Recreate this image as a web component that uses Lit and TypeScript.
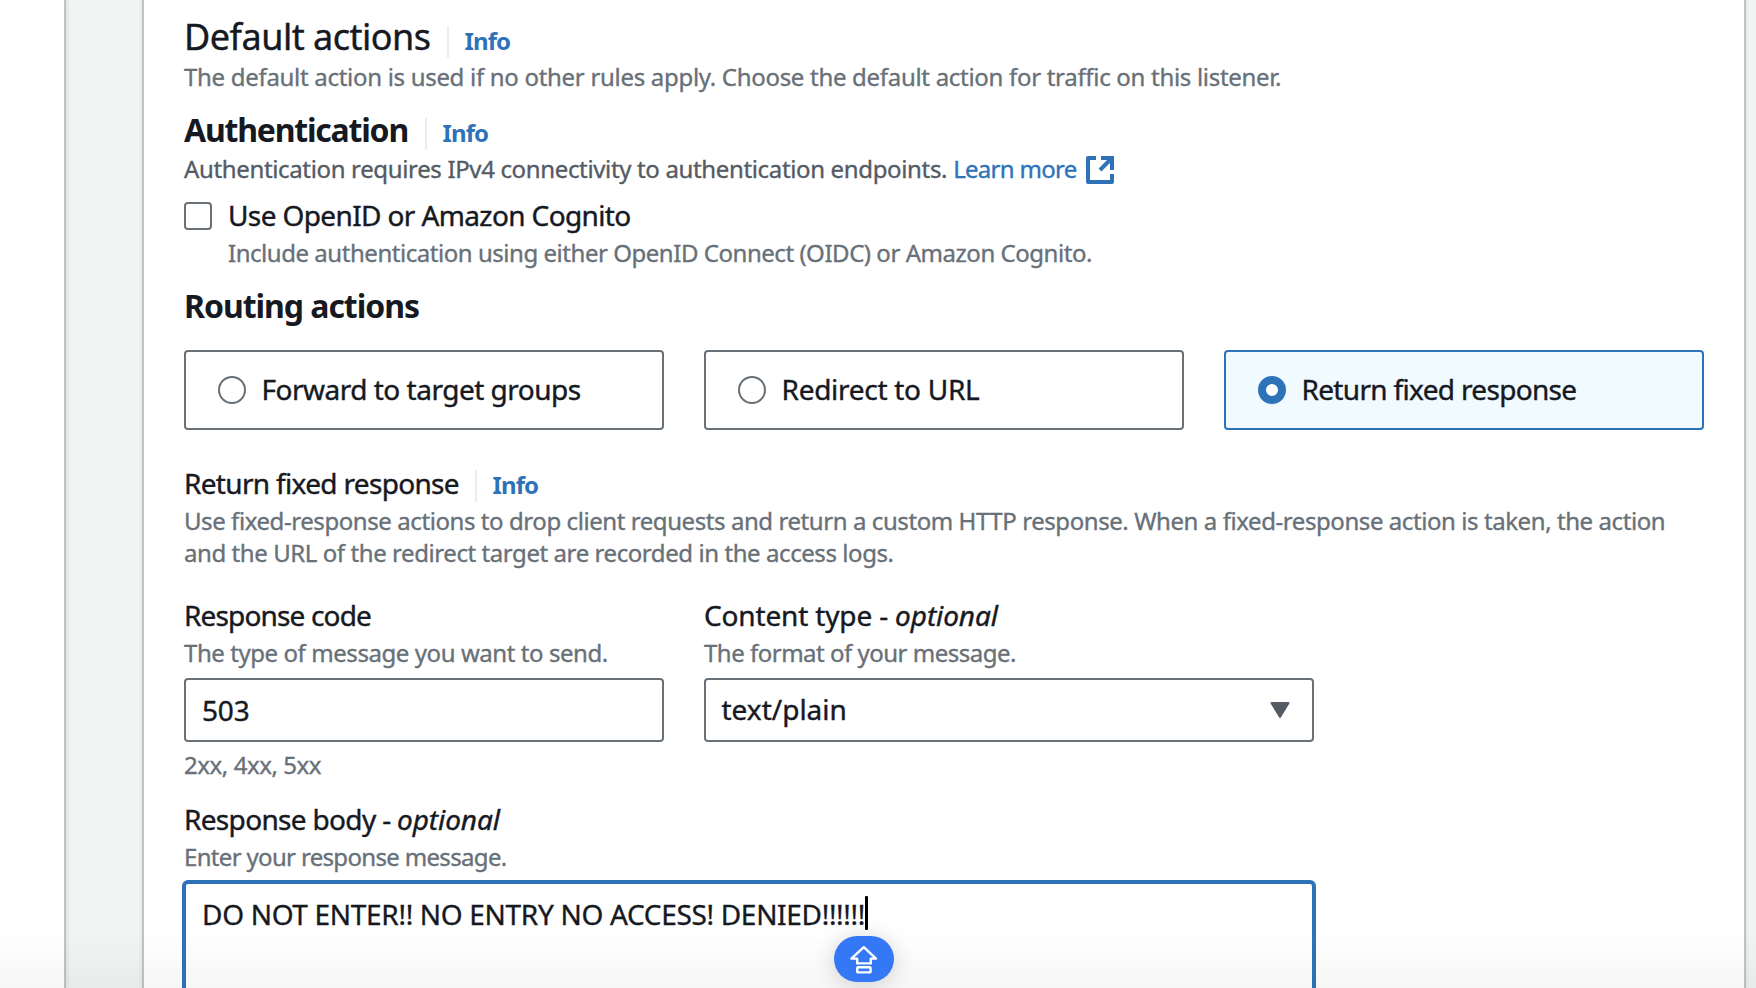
import { LitElement, html, css } from "lit";
import { customElement, property, state } from "lit/decorators.js";
import { classMap } from "lit/directives/class-map.js";

@customElement("info-heading")
class InfoHeading extends LitElement {
  @property() level = "label";
  @property() text = "";

  static styles = css`
    :host { display: block; }
    .row { display: flex; align-items: baseline; white-space: nowrap; }
    .title { color: #16191f; }
    .h2 { font-size: 36px; line-height: 44px; letter-spacing: -0.5px; width: 263px; -webkit-text-stroke: 0.4px; }
    .h3 { font-size: 32px; line-height: 40px; font-weight: 700; letter-spacing: -1.21px; width: 241px; }
    .label { font-size: 28px; line-height: 40px; letter-spacing: -0.67px; width: 291px; -webkit-text-stroke: 0.4px; }
    .divider { align-self: flex-end; width: 2px; height: 32px; background: #eaeded; }
    .h2 + .divider { margin-bottom: 1px; }
    .label + .divider { margin-bottom: 1px; }
    .info { margin-left: 15.5px; color: #2e73b8; font-size: 24px; line-height: 32px; font-weight: 700; letter-spacing: -0.9px; }
  `;

  render() {
    return html`<div class="row">
      <span class="title ${this.level}">${this.text}</span>
      <span class="divider"></span>
      <span class="info">Info</span>
    </div>`;
  }
}

@customElement("app-root")
class AppRoot extends LitElement {
  @state() private selected = 2;

  private options = [
    { label: "Forward to target groups", cls: "t-forward" },
    { label: "Redirect to URL", cls: "t-redirect" },
    { label: "Return fixed response", cls: "t-return" },
  ];

  static styles = css`
    * { box-sizing: border-box; }
    :host {
      display: block; position: relative; width: 1756px; height: 988px; overflow: hidden;
      background: #f2f3f3; color: #16191f; font-family: "Noto Sans", sans-serif;
    }
    .page { display: flex; height: 988px; }
    .nav { width: 66px; flex: none; background: #fff; border-right: 2px solid #c0c4c7; box-shadow: 1px 0 4px rgba(0, 28, 36, 0.12); }
    .panel {
      width: 1604px; flex: none; margin-left: 76px; padding: 15px 40px 0; background: #fff;
      border-left: 2px solid #c0c4c7; border-right: 2px solid #c0c4c7; box-shadow: 0 0 4px rgba(0, 28, 36, 0.12);
    }
    .desc { font-size: 24px; line-height: 32px; color: #687078; letter-spacing: -0.43px; white-space: nowrap; -webkit-text-stroke: 0.35px; }
    .label { font-size: 28px; line-height: 40px; white-space: nowrap; letter-spacing: -0.6px; -webkit-text-stroke: 0.4px; }
    .label em { letter-spacing: -0.1px; }
    .d-intro { margin-top: 2px; letter-spacing: -0.3px; }
    .auth { margin-top: 17px; }
    .auth-desc { display: flex; align-items: center; height: 32px; margin-top: 3px; color: #545b64; letter-spacing: -0.35px; }
    .learn { margin-left: 6px; color: #2e73b8; letter-spacing: -0.7px; }
    .ext { display: block; margin: 2px 0 0 9px; }
    .check { display: flex; align-items: flex-start; gap: 16px; margin-top: 10px; }
    .box { width: 28px; height: 28px; margin-top: 7px; border: 2px solid #687078; border-radius: 4px; background: #fff; flex: none; }
    .t-openid { letter-spacing: -0.62px; }
    .d-openid { margin-top: 2px; letter-spacing: -0.46px; }
    .routing { margin-top: 17px; font-size: 32px; line-height: 40px; font-weight: 700; letter-spacing: -1.04px; }
    .cards { display: grid; grid-template-columns: repeat(3, 480px); column-gap: 40px; margin-top: 24px; }
    .card { display: flex; align-items: center; gap: 15.5px; height: 80px; padding-left: 32px; border: 2px solid #687078; border-radius: 4px; background: #fff; }
    .card .label { padding-bottom: 2px; }
    .card.on { border-color: #2e73b8; background: #f1faff; }
    .radio { width: 28px; height: 28px; border: 2px solid #687078; border-radius: 50%; background: #fff; flex: none; }
    .on .radio { border: 8px solid #2e73b8; }
    .t-forward { letter-spacing: -0.5px; }
    .t-redirect { letter-spacing: -0.28px; }
    .t-return { letter-spacing: -0.67px; }
    .fixed { margin-top: 33px; }
    .d-fixed { margin-top: 2px; letter-spacing: -0.425px; }
    .fields { display: grid; grid-template-columns: 480px 610px; column-gap: 40px; margin-top: 26px; }
    .d-field { margin-top: 2px; }
    .t-code { letter-spacing: -0.84px; }
    .t-type { letter-spacing: -0.16px; }
    .d-format { letter-spacing: -0.5px; }
    .input { display: flex; align-items: center; justify-content: space-between; height: 64px; margin-top: 9px; padding: 0 22px 0 15.5px; border: 2px solid #687078; border-radius: 4px; background: #fff; font-size: 28px; -webkit-text-stroke: 0.4px; }
    .t-503 { letter-spacing: -0.2px; padding-left: 0.5px; }
    .t-mime { padding-bottom: 2px; }
    .t-hint { margin-top: 7px; }
    .body { margin-top: 18px; letter-spacing: -0.67px; }
    .d-enter { letter-spacing: -0.67px; }
    .area { width: 1134px; height: 150px; margin: 7px 0 0 -2px; padding: 10px 16px; border: 4px solid #2e73b8; border-radius: 6px; background: #fff; display: flex; align-items: flex-start; }
    .typed { font-size: 28px; line-height: 40px; letter-spacing: -0.31px; white-space: nowrap; -webkit-text-stroke: 0.35px; }
    .caret { width: 3px; height: 34px; margin-top: 2px; border-radius: 1px; background: #000; flex: none; }
    .fade { position: absolute; left: 0; right: 0; bottom: 0; height: 56px; background: linear-gradient(rgba(0, 0, 0, 0), rgba(0, 0, 0, 0.035)); }
    .caps {
      position: absolute; left: 834px; top: 936px; width: 60px; height: 46px; border-radius: 23px;
      background: #3478f6; box-shadow: 0 2px 22px rgba(0, 0, 0, 0.17);
    }
    .caps svg { display: block; }
  `;

  render() {
    return html`
      <div class="page">
        <div class="nav"></div>
        <main class="panel">
          <info-heading level="h2" text="Default actions"></info-heading>
          <div class="desc d-intro">The default action is used if no other rules apply. Choose the default action for traffic on this listener.</div>

          <info-heading class="auth" level="h3" text="Authentication"></info-heading>
          <div class="desc auth-desc">
            <span>Authentication requires IPv4 connectivity to authentication endpoints.</span>
            <span class="learn">Learn more</span>
            <svg class="ext" width="28" height="28" viewBox="0 0 28 28" fill="none" stroke="#2e73b8" stroke-width="4">
              <path d="M10 2H2V26H26V18" stroke-linejoin="round" />
              <path d="M15 2H26V14M25 3L14 14" />
            </svg>
          </div>

          <div class="check">
            <span class="box"></span>
            <div>
              <div class="label t-openid">Use OpenID or Amazon Cognito</div>
              <div class="desc d-openid">Include authentication using either OpenID Connect (OIDC) or Amazon Cognito.</div>
            </div>
          </div>

          <div class="routing">Routing actions</div>
          <div class="cards">
            ${this.options.map(
              (o, i) => html`<div class=${classMap({ card: true, on: i === this.selected })} @click=${() => (this.selected = i)}>
                <span class="radio"></span><span class="label ${o.cls}">${o.label}</span>
              </div>`
            )}
          </div>

          <info-heading class="fixed" text="Return fixed response"></info-heading>
          <div class="desc d-fixed">
            Use fixed-response actions to drop client requests and return a custom HTTP response. When a fixed-response action is taken, the action<br />and the URL of the redirect target are recorded in the access logs.
          </div>

          <div class="fields">
            <div>
              <div class="label t-code">Response code</div>
              <div class="desc d-field">The type of message you want to send.</div>
              <div class="input"><span class="t-503">503</span></div>
              <div class="desc t-hint">2xx, 4xx, 5xx</div>
            </div>
            <div>
              <div class="label t-type">Content type - <em>optional</em></div>
              <div class="desc d-field d-format">The format of your message.</div>
              <div class="input">
                <span class="t-mime">text/plain</span>
                <svg width="20" height="16" viewBox="0 0 20 16"><path d="M1.5 1H18.5L10 15Z" fill="#545b64" stroke="#545b64" stroke-width="2" stroke-linejoin="round" /></svg>
              </div>
            </div>
          </div>

          <div class="label body">Response body - <em>optional</em></div>
          <div class="desc d-field d-enter">Enter your response message.</div>
          <div class="area"><span class="typed">DO NOT ENTER!! NO ENTRY NO ACCESS! DENIED!!!!!!</span><span class="caret"></span></div>
        </main>
      </div>
      <div class="fade"></div>
      <div class="caps">
        <svg width="60" height="46" viewBox="0 0 60 46" fill="none" stroke="#fff" stroke-width="2.4" stroke-linejoin="round">
          <path d="M29.8 11.2L42 22.6H36.8V27.4H23.2V22.6H17.4Z" />
          <rect x="23.2" y="31.2" width="13.4" height="5.2" rx="1" />
        </svg>
      </div>
    `;
  }
}
